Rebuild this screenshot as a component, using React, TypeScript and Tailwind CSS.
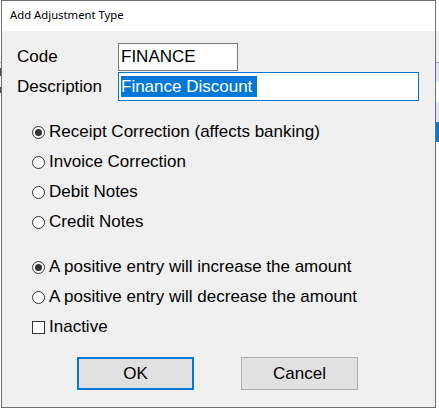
import { useState } from "react";

const Radio = ({ checked, label }: { checked: boolean; label: string }) => (
  <div className="flex h-[30px] items-center">
    <span className="flex h-[13px] w-[13px] items-center justify-center rounded-full border border-[#333333] bg-white">
      {checked && <span className="h-[7px] w-[7px] rounded-full bg-[#333333]" />}
    </span>
    <span className="ml-[4px]">{label}</span>
  </div>
);

const App = () => {
  const [inactive] = useState(false);

  return (
    <div className="flex h-[412px] w-[439px] bg-white text-black">
      {/* sliver of the window behind, left side */}
      <div className="flex w-px flex-col">
        <div className="h-[62px]" />
        <div className="h-px bg-[#a0a0a0]" />
        <div className="mt-[5px] h-[8px] bg-[#555555]" />
        <div className="mt-[11px] h-[6px] bg-[#555555]" />
      </div>

      {/* dialog */}
      <div className="flex h-[408px] w-[435px] flex-col border border-[#6f6f6f]">
        <div
          className="flex h-[30px] items-center bg-white pl-[8px] pb-[2px] text-[11.3px]"
          style={{ fontFamily: '"Noto Sans", "Open Sans", sans-serif' }}
        >
          Add Adjustment Type
        </div>

        <div
          className="flex flex-1 flex-col bg-[#f0f0f0] text-[17px]"
          style={{ fontFamily: '"Liberation Sans", Arial, sans-serif' }}
        >
          {/* fields */}
          <div className="mt-[12px] flex flex-col gap-px pl-[15px]">
            <div className="flex items-center">
              <span className="w-[101px]">Code</span>
              <div className="flex h-[28px] w-[120px] items-center border border-[#7a7a7a] bg-white pl-[2px]">
                FINANCE
              </div>
            </div>
            <div className="flex items-center">
              <span className="w-[101px]">Description</span>
              <div className="flex h-[29px] w-[301px] items-center border border-[#0078d7] bg-white pl-[2px]">
                <span className="inline-block h-[21px] whitespace-pre bg-[#0078d7] leading-[21px] text-white">
                  Finance Discount{" "}
                </span>
              </div>
            </div>
          </div>

          {/* type */}
          <div className="mt-[16px] flex flex-col pl-[30px]">
            <Radio checked label="Receipt Correction (affects banking)" />
            <Radio checked={false} label="Invoice Correction" />
            <Radio checked={false} label="Debit Notes" />
            <Radio checked={false} label="Credit Notes" />
          </div>

          {/* sign + inactive */}
          <div className="mt-[15px] flex flex-col pl-[30px]">
            <Radio checked label="A positive entry will increase the amount" />
            <Radio checked={false} label="A positive entry will decrease the amount" />
            <div className="flex h-[30px] items-center">
              <span className="h-[13px] w-[13px] border border-[#333333] bg-white">
                {inactive ? "✓" : ""}
              </span>
              <span className="ml-[4px]">Inactive</span>
            </div>
          </div>

          {/* buttons */}
          <div className="mt-[15px] flex gap-[47px] pl-[75px]">
            <button className="h-[33px] w-[117px] border-2 border-[#0078d7] bg-[#e1e1e1]">OK</button>
            <button className="h-[33px] w-[117px] border border-[#adadad] bg-[#e1e1e1]">Cancel</button>
          </div>
        </div>
      </div>

      {/* sliver of the window behind, right side */}
      <div className="flex w-[3px] flex-col">
        <div className="h-[31px] bg-white" />
        <div className="h-[31px] bg-[#f0f0f0]" />
        <div className="h-px bg-[#a0a0a0]" />
        <div className="h-[19px] bg-[#dbe4f8]" />
        <div className="h-[20px] bg-white" />
        <div className="h-[20px] bg-[#dbe4f8]" />
        <div className="h-[20px] bg-[#0078d7]" />
      </div>
    </div>
  );
};

export default App;
